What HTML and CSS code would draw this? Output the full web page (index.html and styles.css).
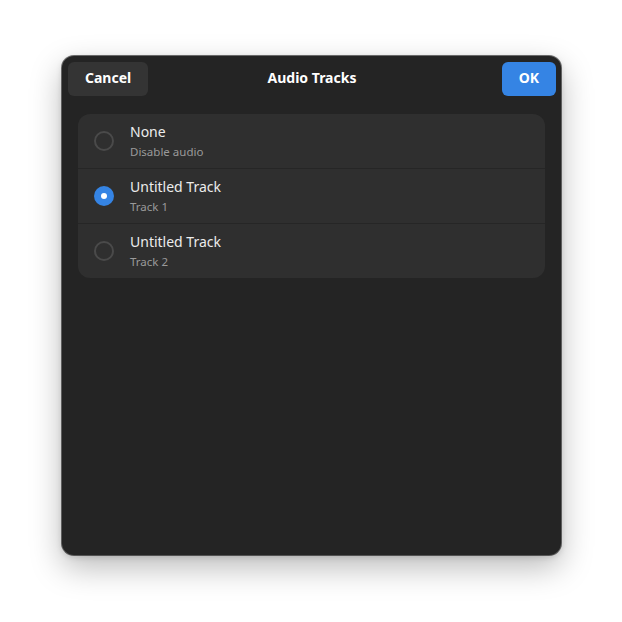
FILE: index.html
```html
<!DOCTYPE html>
<html lang="en">
<head>
<meta charset="utf-8">
<title>Audio Tracks</title>
<link rel="stylesheet" href="styles.css">
</head>
<body>
<div class="dialog">
  <header class="headerbar">
    <div class="start"><button class="btn btn-cancel">Cancel</button></div>
    <div class="title">Audio Tracks</div>
    <div class="end"><button class="btn btn-ok">OK</button></div>
  </header>
  <div class="content">
    <div class="list">
      <div class="row">
        <span class="radio"></span>
        <div class="labels">
          <div class="row-title">None</div>
          <div class="row-sub">Disable audio</div>
        </div>
      </div>
      <div class="row">
        <span class="radio checked"></span>
        <div class="labels">
          <div class="row-title">Untitled Track</div>
          <div class="row-sub">Track 1</div>
        </div>
      </div>
      <div class="row">
        <span class="radio"></span>
        <div class="labels">
          <div class="row-title">Untitled Track</div>
          <div class="row-sub">Track 2</div>
        </div>
      </div>
    </div>
  </div>
</div>
</body>
</html>
```
FILE: styles.css
```css
html {
  margin: 0;
  padding: 0;
  background: #ffffff;
}
body {
  margin: 0;
  min-height: 622px;
  box-sizing: border-box;
  padding: 56px 0 0 62px;
  font-family: "Noto Sans", "Open Sans", sans-serif;
}
.dialog {
  width: 499px;
  height: 499px;
  box-sizing: border-box;
  background: #242424;
  border-radius: 12px;
  box-shadow: 0 0 0 1px rgba(0,0,0,0.55), 0 12px 32px rgba(0,0,0,0.28), 0 2px 6px rgba(0,0,0,0.14);
  display: flex;
  flex-direction: column;
  overflow: hidden;
}
.headerbar {
  display: grid;
  grid-template-columns: 1fr auto 1fr;
  align-items: center;
  padding: 6px 5px 6px 6px;
  height: 46px;
  box-sizing: border-box;
}
.start {
  display: flex;
  justify-content: flex-start;
}
.end {
  display: flex;
  justify-content: flex-end;
}
.title {
  color: #ffffff;
  font-weight: 700;
  font-size: 14px;
  padding-bottom: 3px;
}
.btn {
  height: 34px;
  border: none;
  border-radius: 6px;
  padding: 0 17px 3px;
  font-family: inherit;
  font-size: 14px;
  font-weight: 700;
  color: #ffffff;
}
.btn-cancel {
  background: #343434;
}
.btn-ok {
  background: #3584e4;
}
.content {
  padding: 12px 16px;
}
.list {
  background: #2f2f2f;
  border-radius: 12px;
  overflow: hidden;
}
.row {
  display: flex;
  align-items: center;
  gap: 16px;
  height: 54px;
  padding: 0 16px;
}
.row + .row {
  border-top: 1px solid #262626;
}
.radio {
  width: 20px;
  height: 20px;
  box-sizing: border-box;
  border-radius: 50%;
  border: 2px solid #4a4a4a;
  flex: none;
  position: relative;
}
.radio.checked {
  border: none;
  background: #3584e4;
}
.radio.checked::after {
  content: "";
  position: absolute;
  left: 7px;
  top: 7px;
  width: 6px;
  height: 6px;
  border-radius: 50%;
  background: #ffffff;
}
.labels {
  display: flex;
  flex-direction: column;
  gap: 2px;
  padding-bottom: 1px;
}
.row-title {
  color: #ececec;
  font-size: 14px;
  line-height: 20px;
}
.row-sub {
  color: #9a9a9a;
  font-size: 11.5px;
  line-height: 16px;
}
```
